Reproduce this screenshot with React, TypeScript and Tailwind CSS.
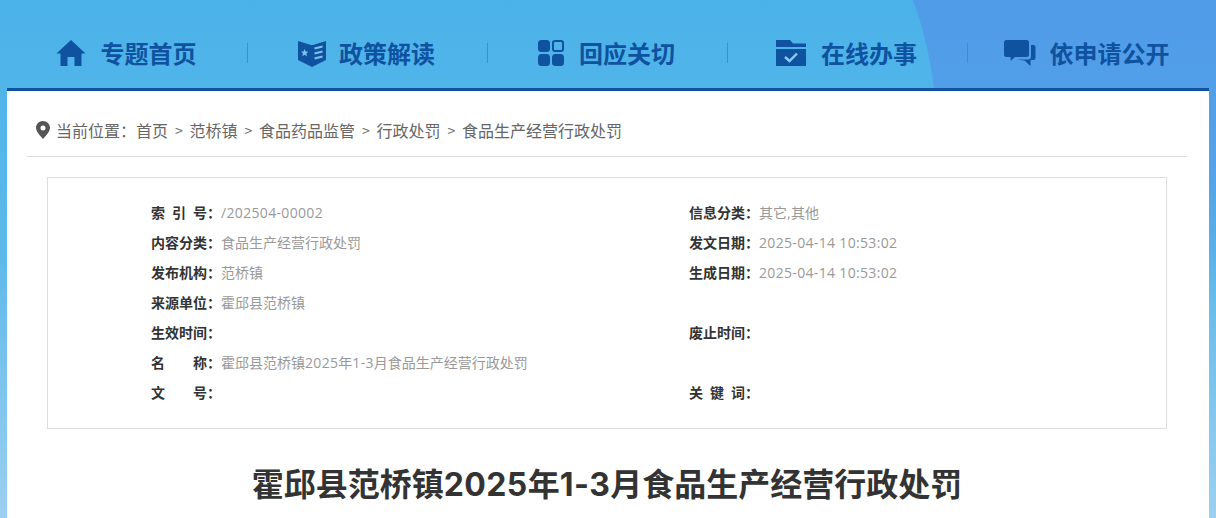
import React from 'react';

const navColor = '#0f52a0';

const HomeIcon = () => (
  <svg width="30" height="26" viewBox="0 0 30 26" fill={navColor}>
    <path d="M15 0 L29.5 13.5 L25.5 13.5 L25.5 26 L18.5 26 L18.5 17 L11.5 17 L11.5 26 L4.5 26 L4.5 13.5 L0.5 13.5 Z" />
  </svg>
);

const BookIcon = () => (
  <svg width="28" height="27" viewBox="0 0 28 27">
    <path d="M0 1 L0 20 L14 27 L28 20 L28 1 L15 5 L13 5 Z" fill={navColor} />
    <path d="M6.5 9 L7.7 11.6 L10.4 11.8 L8.3 13.5 L9 16.2 L6.5 14.8 L4.3 16.2 L5 13.5 L3 11.8 L5.5 11.6 Z" fill="#7cc4ee" />
    <path d="M16.5 8.5 L24.5 6.5 M16.5 13.5 L24.5 11.5 M16.5 18.5 L24.5 16.5" stroke="#7cc4ee" strokeWidth="2" fill="none" />
  </svg>
);

const GridIcon = () => (
  <svg width="26" height="26" viewBox="0 0 26 26" fill={navColor}>
    <rect x="0" y="0" width="12" height="12" rx="3.5" />
    <rect x="15" y="1" width="10" height="10" rx="2" fill="none" stroke={navColor} strokeWidth="2" />
    <rect x="0" y="14" width="12" height="12" rx="3.5" />
    <rect x="14" y="14" width="12" height="12" rx="3.5" />
  </svg>
);

const FolderIcon = () => (
  <svg width="30" height="26" viewBox="0 0 30 26">
    <path d="M0 0 L14 0 L17 3.5 L30 3.5 L30 7 L0 7 Z" fill={navColor} />
    <rect x="0" y="9" width="30" height="17" fill={navColor} />
    <path d="M9 17 L13.5 21 L21 13.5" stroke="#8fcbf0" strokeWidth="2.4" fill="none" />
  </svg>
);

const ChatIcon = () => (
  <svg width="32" height="27" viewBox="0 0 32 27" fill={navColor}>
    <path d="M2.5 0 L22.5 0 Q25 0 25 2.5 L25 14.5 Q25 17 22.5 17 L11 17 L6.5 21 L6.5 17 L2.5 17 Q0 17 0 14.5 L0 2.5 Q0 0 2.5 0 Z" />
    <path d="M27 5 L29.5 5 Q31.5 5 31.5 7 L31.5 18 Q31.5 20 29.5 20 L26.5 20 L26.5 26 L20.5 20.5 L13 19.5 L24 19.5 Q27 19.5 27 16.5 Z" />
  </svg>
);

const PinIcon = () => (
  <svg width="14" height="18" viewBox="0 0 14 18" fill="#555555">
    <path fillRule="evenodd" d="M7 0 C3 0 0 3 0 6.8 C0 11 5 15.5 7 18 C9 15.5 14 11 14 6.8 C14 3 11 0 7 0 Z M7 4.4 A2.5 2.5 0 1 1 7 9.4 A2.5 2.5 0 1 1 7 4.4 Z" />
  </svg>
);

const navItems = [
  { label: '专题首页', icon: <HomeIcon />, gap: 'gap-[15px]' },
  { label: '政策解读', icon: <BookIcon />, gap: 'gap-[13px] pl-[1px]' },
  { label: '回应关切', icon: <GridIcon />, gap: 'gap-[15px] pl-[1px]' },
  { label: '在线办事', icon: <FolderIcon />, gap: 'gap-[15px] pl-[1px]' },
  { label: '依申请公开', icon: <ChatIcon />, gap: 'gap-[14px] pl-[1px]' },
];

const crumbs = ['首页', '范桥镇', '食品药品监管', '行政处罚', '食品生产经营行政处罚'];

const infoRows = [
  ['索 引 号：', '/202504-00002', '信息分类：', '其它,其他'],
  ['内容分类：', '食品生产经营行政处罚', '发文日期：', '2025-04-14 10:53:02'],
  ['发布机构：', '范桥镇', '生成日期：', '2025-04-14 10:53:02'],
  ['来源单位：', '霍邱县范桥镇', '', ''],
  ['生效时间：', '', '废止时间：', ''],
  ['名 称：', '霍邱县范桥镇2025年1-3月食品生产经营行政处罚', '', ''],
  ['文 号：', '', '关 键 词：', ''],
];

// digits in the original are wider than the CJK font's, so they get their own span
const Value = ({ text }: { text: string }) => (
  <span className="text-[#999999]">
    {text.split(/([\x20-\x7e]+)/).map((part, i) =>
      i % 2 === 1 ? (
        <span key={i} className="font-['Open_Sans',sans-serif] tracking-[0.33px]">{part}</span>
      ) : (
        part
      )
    )}
  </span>
);

const Cell = ({ label, value }: { label: string; value: string }) => (
  <div className="flex h-[30px] items-center text-sm">
    {label && (
      <span className="flex w-[70px] justify-between font-bold text-[#333333]">
        {label.split(' ').map((part) => (
          <span key={part}>{part}</span>
        ))}
      </span>
    )}
    <Value text={value} />
  </div>
);

export default function App() {
  return (
    <div className="relative h-[518px] overflow-hidden bg-gradient-to-b from-[#4ab2e9] via-[#5db9ea] to-[#9bd0f0] font-['Microsoft_YaHei','Noto_Sans_CJK_SC',sans-serif]">
      {/* top right tint */}
      <svg className="absolute right-0 top-0" width="310" height="300" viewBox="0 0 310 300">
        <defs>
          <linearGradient id="tint" x1="0" y1="0" x2="0" y2="1">
            <stop offset="0" stopColor="#4f9be8" />
            <stop offset="0.55" stopColor="#55a2e8" />
            <stop offset="1" stopColor="#55a2e8" stopOpacity="0" />
          </linearGradient>
        </defs>
        <path d="M7 0 C16 24 24 55 28 88 L30 300 L310 300 L310 0 Z" fill="url(#tint)" />
      </svg>

      <div className="relative ml-[7px] w-[1202px]">
        <nav className="flex h-[88px]">
          {navItems.map((item, idx) => (
            <div key={item.label} className="relative flex w-[240px] items-center justify-center pr-[2px] pt-[18px]">
              {idx > 0 && <span className="absolute left-0 top-[43px] h-[20px] w-px bg-[#3f8ecb]" />}
              <div className={`flex items-center ${item.gap}`}>
                {item.icon}
                <span className="text-2xl font-bold leading-none text-[#0f52a0]">{item.label}</span>
              </div>
            </div>
          ))}
        </nav>

        <main className="h-[430px] border-t-[3px] border-[#0f52a0] bg-white pl-5 pr-[22px]">
          <div className="flex h-[66px] items-center border-b border-[#dddddd] pl-[9px] pt-[12px] text-base text-[#666666]">
            <PinIcon />
            <span className="ml-[6px]">当前位置：</span>
            {crumbs.map((crumb, idx) => (
              <React.Fragment key={crumb}>
                {idx > 0 && <span className="w-[21.5px] text-center text-sm">&gt;</span>}
                <span>{crumb}</span>
              </React.Fragment>
            ))}
          </div>

          <section className="mx-5 mt-5 h-[252px] border border-[#dddddd] pl-[103px] pt-[19px]">
            {infoRows.map((row) => (
              <div key={row[0]} className="grid grid-cols-[538px_1fr]">
                <Cell label={row[0]} value={row[1]} />
                <Cell label={row[2]} value={row[3]} />
              </div>
            ))}
          </section>

          <h1 className="mt-[30px] text-center text-[32px] font-bold leading-[46px] text-[#333333]">
            霍邱县范桥镇<span className="font-['Inter',sans-serif] tracking-[0.4px]">2025</span>年<span className="font-['Inter',sans-serif] tracking-[0.4px]">1-3</span>月食品生产经营行政处罚
          </h1>
        </main>
      </div>
    </div>
  );
}
